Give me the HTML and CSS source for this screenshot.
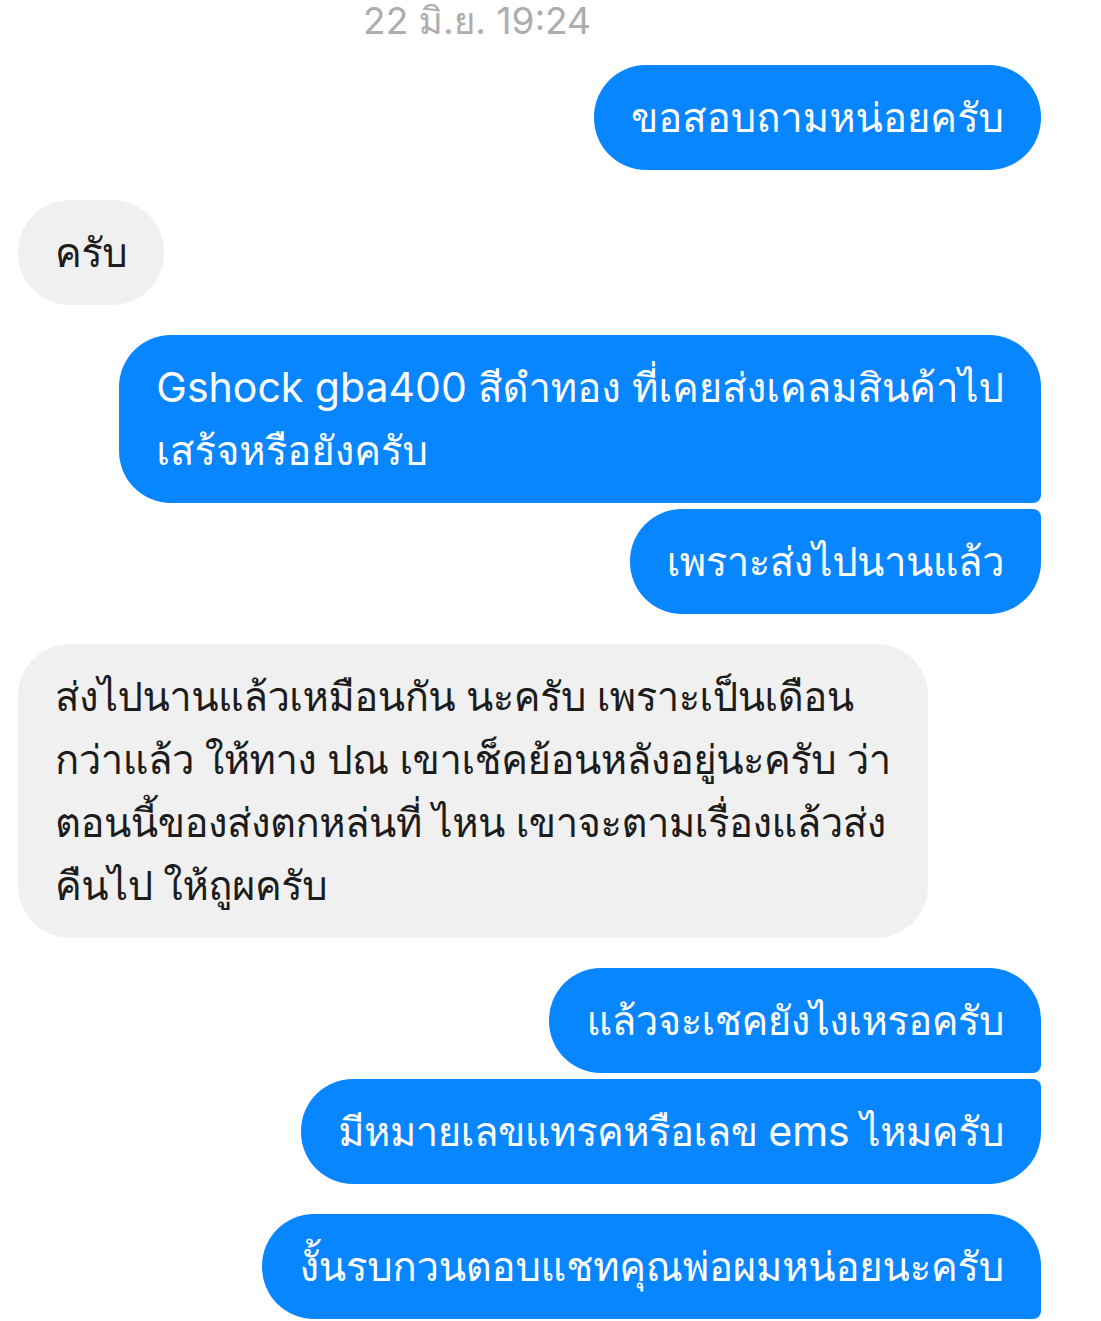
FILE: index.html
```html
<!DOCTYPE html>
<html lang="th">
<head>
<meta charset="utf-8">
<link rel="stylesheet" href="styles.css">
</head>
<body>
<div class="chat">
  <div class="stamp"><span>22 มิ.ย. 19:24</span></div>

  <div class="group sent">
    <div class="bubble solo wide">ขอสอบถามหน่อยครับ</div>
  </div>

  <div class="group recv">
    <div class="bubble solo">ครับ</div>
  </div>

  <div class="group sent">
    <div class="bubble first wide"><span class="latin">Gshock gba400</span> สีดำทอง ที่เคยส่งเคลมสินค้าไป<br>เสร้จหรือยังครับ</div>
    <div class="bubble last">เพราะส่งไปนานแล้ว</div>
  </div>

  <div class="group recv">
    <div class="bubble solo">ส่งไปนานแล้วเหมือนกัน นะครับ เพราะเป็นเดือน<br>กว่าแล้ว ให้ทาง ปณ เขาเช็คย้อนหลังอยู่นะครับ ว่า<br>ตอนนี้ของส่งตกหล่นที่ ไหน เขาจะตามเรื่องแล้วส่ง<br>คืนไป ให้ถูผครับ</div>
  </div>

  <div class="group sent">
    <div class="bubble first">แล้วจะเชคยังไงเหรอครับ</div>
    <div class="bubble last">มีหมายเลขแทรคหรือเลข <span class="latin">ems</span> ไหมครับ</div>
  </div>

  <div class="group sent">
    <div class="bubble first mid">งั้นรบกวนตอบแชทคุณพ่อผมหน่อยนะครับ</div>
  </div>
</div>
</body>
</html>
```

FILE: styles.css
```css
html, body {
  margin: 0;
  padding: 0;
  background: #ffffff;
}

.chat {
  display: flex;
  flex-direction: column;
  gap: 30px;
  padding: 0 60px 0 18px;
  font-family: "Inter", "Loma", "Noto Sans Thai Looped", sans-serif;
}

.stamp {
  display: flex;
  justify-content: center;
  padding-right: 105px;
  margin-bottom: -15px;
  height: 50px;
  align-items: center;
}

.stamp span {
  font-size: 37px;
  line-height: 40px;
  color: #adadad;
  margin-top: -9px;
}

.group {
  display: flex;
  flex-direction: column;
  gap: 6px;
}

.group.sent {
  align-items: flex-end;
}

.group.recv {
  align-items: flex-start;
}

.bubble {
  font-size: 40px;
  line-height: 63px;
  padding: 21px 37px 21px 37px;
  border-radius: 52px;
  white-space: nowrap;
  letter-spacing: -0.5px;
}

.bubble.wide {
  letter-spacing: 0;
}

.bubble.mid {
  letter-spacing: -0.2px;
}

.latin {
  font-size: 41px;
  letter-spacing: 0;
}

.sent .bubble {
  background: #0786ff;
  color: #ffffff;
}

.recv .bubble {
  background: #f0f0f0;
  color: #1c1c1c;
}

.sent .bubble.first {
  border-bottom-right-radius: 8px;
}

.sent .bubble.last {
  border-top-right-radius: 8px;
}
```
